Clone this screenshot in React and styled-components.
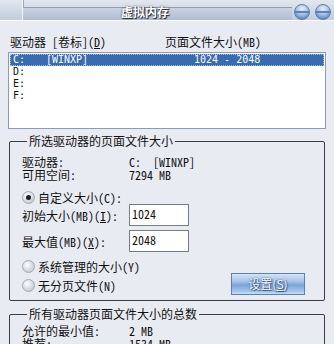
import React from 'react';
import styled, { createGlobalStyle } from 'styled-components';

const FONT = `"Noto Sans Mono CJK SC", "Noto Sans CJK SC", "Liberation Mono", monospace`;

const GlobalStyle = createGlobalStyle`
  html, body {
    margin: 0;
    padding: 0;
    background: #e8ebf2;
  }
  body {
    font-family: ${FONT};
    font-size: 12px;
    color: #111;
    overflow: hidden;
  }
`;

const drives = [
  { letter: 'C:', label: '[WINXP]', size: '1024 - 2048', selected: true },
  { letter: 'D:' },
  { letter: 'E:' },
  { letter: 'F:' },
];

const App = () => (
  <Window>
    <GlobalStyle />
    <TitleBar>
      <TitleLeft />
      <TitleTrack>
        <TitleBand>
          <TitleText>虚拟内存</TitleText>
        </TitleBand>
      </TitleTrack>
      <TitleButtons>
        <Orb />
        <Orb />
      </TitleButtons>
    </TitleBar>

    <Body>
      <HeaderRow>
        <span>驱动器 [卷标](<u>D</u>)</span>
        <span>页面文件大小(MB)</span>
      </HeaderRow>
      <DriveList>
        {drives.map((d) => (
          <DriveRow key={d.letter} selected={d.selected}>
            <span>{d.letter}</span>
            <span>{d.label}</span>
            <span>{d.size}</span>
          </DriveRow>
        ))}
      </DriveList>

      <Group>
        <Legend>所选驱动器的页面文件大小</Legend>
        <InfoRow>
          <Label>驱动器:</Label>
          <span>C:  [WINXP]</span>
        </InfoRow>
        <InfoRow>
          <Label>可用空间:</Label>
          <span>7294 MB</span>
        </InfoRow>
        <RadioRow top={9}>
          <Radio checked />
          <span>自定义大小(C):</span>
        </RadioRow>
        <FieldRow>
          <Label>初始大小(MB)(<u>I</u>):</Label>
          <TextBox>1024</TextBox>
        </FieldRow>
        <FieldRow top={4}>
          <Label>最大值(MB)(<u>X</u>):</Label>
          <TextBox>2048</TextBox>
        </FieldRow>
        <BottomRow>
          <RadioColumn>
            <RadioRow>
              <Radio />
              <span>系统管理的大小(Y)</span>
            </RadioRow>
            <RadioRow>
              <Radio />
              <span>无分页文件(N)</span>
            </RadioRow>
          </RadioColumn>
          <SetButton>设置(<u>S</u>)</SetButton>
        </BottomRow>
      </Group>

      <Group second>
        <Legend>所有驱动器页面文件大小的总数</Legend>
        <InfoRow>
          <Label>允许的最小值:</Label>
          <span>2 MB</span>
        </InfoRow>
        <InfoRow>
          <Label>推荐:</Label>
          <span>1534 MB</span>
        </InfoRow>
      </Group>
    </Body>
  </Window>
);

export default App;

const Window = styled.div`
  width: 334px;
  height: 344px;
  background: #e8ebf2;
  overflow: hidden;
`;

const TitleBar = styled.div`
  display: flex;
  height: 20px;
  border-bottom: 1px solid #fbfcfe;
  background: linear-gradient(#e2e7ef, #c3ccdb);
`;

const TitleLeft = styled.div`
  width: 22px;
  border-right: 1px solid #f4f6fa;
  box-shadow: 1px 0 0 #9aa6ba;
`;

const TitleTrack = styled.div`
  flex: 1;
  display: flex;
  flex-direction: column;
  padding-top: 7px;
`;

const TitleBand = styled.div`
  flex: 1;
  display: flex;
  align-items: flex-start;
  padding-left: 98px;
  border-top: 1px solid #8f9bb1;
  background: linear-gradient(#cad3e3, #b0bcd0);
`;

const TitleText = styled.span`
  margin-top: -3px;
  font-family: "Noto Sans CJK SC", sans-serif;
  font-weight: 700;
  font-size: 12px;
  line-height: 14px;
  color: #ffffff;
  text-shadow: 1px 1px 1px #1d2430, 0 0 2px #2a3242;
`;

const TitleButtons = styled.div`
  display: flex;
  gap: 5px;
  padding: 4px 0 0 2px;
  width: 40px;
`;

const Orb = styled.div`
  flex: none;
  width: 16px;
  height: 16px;
  border-radius: 50%;
  box-sizing: border-box;
  border: 1px solid #5b7eab;
  background:
    linear-gradient(transparent 46%, #5a83b8 46%, #5a83b8 54%, transparent 54%),
    radial-gradient(circle at 50% 28%, #e6f0fb 0, #a6c3e6 45%, #5e8cc5 80%, #4a76b0 100%);
`;

const Body = styled.div`
  padding: 14px 8px 0 8px;
`;

const HeaderRow = styled.div`
  display: grid;
  grid-template-columns: 155px 1fr;
  padding-left: 2px;
  line-height: 14px;
  height: 14px;

  u {
    text-decoration: underline;
  }
`;

const DriveList = styled.div`
  margin-top: 3px;
  height: 73px;
  background: #ffffff;
  border: 1px solid #8a9bb3;
  padding: 1px;
`;

const DriveRow = styled.div`
  display: grid;
  grid-template-columns: 33px 148px 1fr;
  height: 12px;
  line-height: 12px;
  padding-left: 3px;
  font-family: "DejaVu Sans Mono", "Liberation Mono", monospace;
  font-size: 10px;
  white-space: pre;
  background: ${(p) => (p.selected ? '#3a6bb0' : 'transparent')};
  color: ${(p) => (p.selected ? '#ffffff' : '#111')};
  outline: ${(p) => (p.selected ? '1px dotted #9fb8dc' : 'none')};
  outline-offset: -1px;
`;

const Group = styled.fieldset`
  margin: ${(p) => (p.second ? '7px' : '6px')} 1px 0 1px;
  padding: ${(p) => (p.second ? '4px' : '8px')} 12px 5px 12px;
  border: 1px solid #3b3e44;
  border-radius: 2px;
  min-width: 0;
`;

const Legend = styled.legend`
  margin-left: 5px;
  padding: 0 2px;
  line-height: 12px;
  font-size: 12px;
`;

const InfoRow = styled.div`
  display: grid;
  grid-template-columns: 107px 1fr;
  line-height: 13px;
  height: 13px;
  white-space: pre;
`;

const Label = styled.span`
  u {
    text-decoration: underline;
  }
`;

const RadioRow = styled.div`
  display: flex;
  align-items: center;
  gap: 3px;
  height: 14px;
  margin-top: ${(p) => p.top || 0}px;
`;

const Radio = styled.span`
  position: relative;
  flex: none;
  width: 13px;
  height: 13px;
  border-radius: 50%;
  box-sizing: border-box;
  border: 1px solid #a4a9b3;
  background: radial-gradient(circle at 38% 35%, #ffffff 0, #e3e6eb 35%, #b9bec7 100%);

  &::after {
    content: '';
    display: ${(p) => (p.checked ? 'block' : 'none')};
    position: absolute;
    left: 3px;
    top: 3px;
    width: 5px;
    height: 5px;
    border-radius: 50%;
    background: #1b1d22;
  }
`;

const FieldRow = styled.div`
  display: grid;
  grid-template-columns: 107px 60px;
  align-items: center;
  margin-top: ${(p) => p.top || 0}px;
`;

const TextBox = styled.div`
  height: 22px;
  box-sizing: border-box;
  border: 1px solid #737d8c;
  background: #ffffff;
  padding: 2px 0 0 2px;
  line-height: 14px;
`;

const BottomRow = styled.div`
  display: flex;
  justify-content: space-between;
  align-items: flex-end;
  margin-top: 7px;
`;

const RadioColumn = styled.div`
  display: flex;
  flex-direction: column;
  gap: 5px;
  padding-bottom: 3px;
`;

const SetButton = styled.div`
  width: 74px;
  height: 22px;
  box-sizing: border-box;
  margin-right: 7px;
  border: 1px solid #5a80b6;
  background: linear-gradient(#d4e3f6 0%, #a9c6ea 35%, #7aa6dc 55%, #a4c3ea 85%, #c9dcf4 100%);
  color: #f4f7fc;
  text-align: center;
  line-height: 20px;
  font-family: "Noto Sans CJK SC", sans-serif;
  text-shadow: 0 0 2px #35557f, 1px 1px 1px #35557f;

  u {
    text-decoration: underline;
  }
`;
